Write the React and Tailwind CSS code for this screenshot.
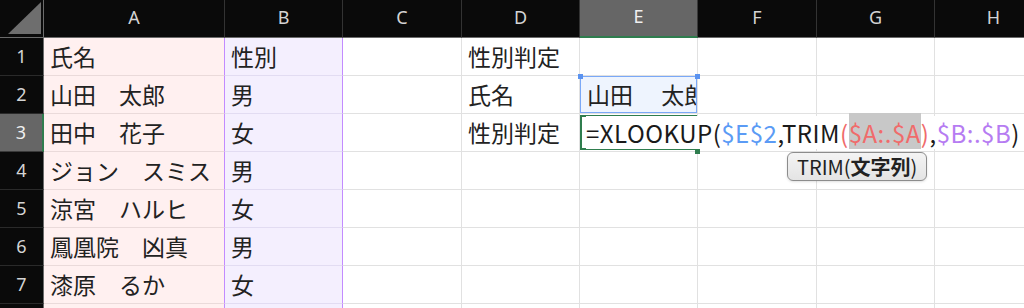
const colHeads = ["A", "B", "C", "D", "E", "F", "G", "H"];

const colA = ["氏名", "山田　太郎", "田中　花子", "ジョン　スミス", "涼宮　ハルヒ", "鳳凰院　凶真", "漆原　るか", ""];
const colB = ["性別", "男", "女", "男", "女", "男", "女", ""];
const colD = ["性別判定", "氏名", "性別判定", "", "", "", "", ""];

const cellFont = { fontFamily: '"Noto Sans CJK JP", "Noto Sans", sans-serif' };

function Corner() {
  return (
    <div className="bg-[#0a0a0a] border-r border-b border-[#6b6b6b]">
      <svg width="43" height="37" viewBox="0 0 43 37">
        <polygon points="8,34 41,2 41,34" fill="#6e6e6e" />
      </svg>
    </div>
  );
}

function ColHead({ label }) {
  const active = label === "E";
  return (
    <div
      className={
        active
          ? "flex items-center justify-center bg-[#666666] text-[#f0f0f0] border-r border-[#3a3a3a] border-b-2 border-b-[#2f7d4e] text-[18px] pb-[3px]"
          : "flex items-center justify-center bg-[#0a0a0a] text-[#d4d4d4] border-r border-[#333333] border-b border-b-[#6b6b6b] text-[18px] pb-[2px]"
      }
      style={{ fontFamily: '"Noto Sans", sans-serif' }}
    >
      {label}
    </div>
  );
}

function RowHead({ n }) {
  const active = n === 3;
  return (
    <div
      className={
        active
          ? "flex items-center justify-center bg-[#666666] text-[#f0f0f0] border-r-2 border-r-[#2f7d4e] border-b border-b-[#3a3a3a] text-[18px]"
          : "flex items-center justify-center bg-[#0a0a0a] text-[#d4d4d4] border-r border-r-[#6b6b6b] border-b border-b-[#2a2a2a] text-[18px]"
      }
      style={{ fontFamily: '"Noto Sans", sans-serif' }}
    >
      {n}
    </div>
  );
}

function Cell({ children, className = "" }) {
  return (
    <div
      className={"flex items-center pl-[6px] whitespace-nowrap text-[23px] text-[#222222] border-r border-b border-[#e1e1e1] " + className}
      style={cellFont}
    >
      {children}
    </div>
  );
}

function FormulaCell() {
  return (
    <div className="relative border-r border-b border-[#e1e1e1]">
      <div className="absolute inset-x-0 top-[1px] bottom-[1px] border-2 border-[#2f7d4e]" />
      <div className="absolute -right-[3px] -bottom-[3px] w-[5px] h-[5px] bg-[#2f7d4e]" />
      <div
        className="absolute left-[2px] -top-[1px] bottom-[2px] z-10 flex items-stretch pl-[4px] pr-[2px] whitespace-nowrap text-[24px] tracking-[0.5px] text-[#1a1a1a]"
        style={cellFont}
      >
        <span className="flex items-center bg-white mt-[3px]">=XLOOKUP(</span>
        <span className="flex items-center bg-white mt-[3px] text-[#5b9bf5]">$E$2</span>
        <span className="flex items-center bg-white mt-[3px]">,TRIM</span>
        <span className="flex items-center bg-white mt-[3px] text-[#f06b6b]">(</span>
        <span className="flex items-center pt-[3px] text-[#f06b6b] bg-[#c8c8c8]">$A:.$A</span>
        <span className="flex items-center bg-white mt-[3px] text-[#f06b6b]">)</span>
        <span className="flex items-center bg-white mt-[3px]">,</span>
        <span className="flex items-center bg-white mt-[3px] text-[#b67cf2]">$B:.$B</span>
        <span className="flex items-center bg-white mt-[3px]">)</span>
      </div>
      <div
        className="absolute left-[207px] top-[38px] z-20 flex items-center h-[29px] px-[9px] rounded-[6px] border border-[#8c8c8c] bg-gradient-to-b from-[#f4f4f4] to-[#e4e4e4] text-[20px] text-[#222222] whitespace-nowrap shadow-sm"
        style={cellFont}
      >
        TRIM(<span className="font-bold">文字列</span>)
      </div>
    </div>
  );
}

function NameCell() {
  return (
    <div className="relative border-r border-b border-[#e1e1e1]">
      <div
        className="absolute inset-0 flex items-center pl-[6px] overflow-hidden whitespace-nowrap bg-[#eef4fe] border border-[#7aa8f7] text-[23px] text-[#222222]"
        style={cellFont}
      >
        山田　 太郎
      </div>
      <div className="absolute -left-[2px] -top-[2px] w-[5px] h-[5px] bg-[#5b93f0]" />
      <div className="absolute -right-[3px] -top-[2px] w-[5px] h-[5px] bg-[#5b93f0]" />
    </div>
  );
}

export default function App() {
  const rows = [1, 2, 3, 4, 5, 6, 7, 8];
  return (
    <div className="w-[1024px] h-[308px] overflow-hidden bg-white">
      <div className="grid w-[1053px] grid-cols-[44px_181px_118px_119px_118px_118px_119px_118px_118px] grid-rows-[38px_repeat(8,38px)]">
        <Corner />
        {colHeads.map((c) => (
          <ColHead key={c} label={c} />
        ))}
        {rows.map((r, i) => (
          <Row key={r} r={r} i={i} />
        ))}
      </div>
    </div>
  );
}

function Row({ r, i }) {
  return (
    <>
      <RowHead n={r} />
      <Cell className="bg-[#fff0f0] border-b-[#eadada] border-r-[#c28bff]">{colA[i]}</Cell>
      <Cell className="bg-[#f4effe] border-b-[#e2dcf2] border-r-[#c28bff]">{colB[i]}</Cell>
      <Cell />
      <Cell>{colD[i]}</Cell>
      {r === 2 ? <NameCell /> : r === 3 ? <FormulaCell /> : <Cell />}
      <Cell />
      <Cell />
      <Cell />
    </>
  );
}
